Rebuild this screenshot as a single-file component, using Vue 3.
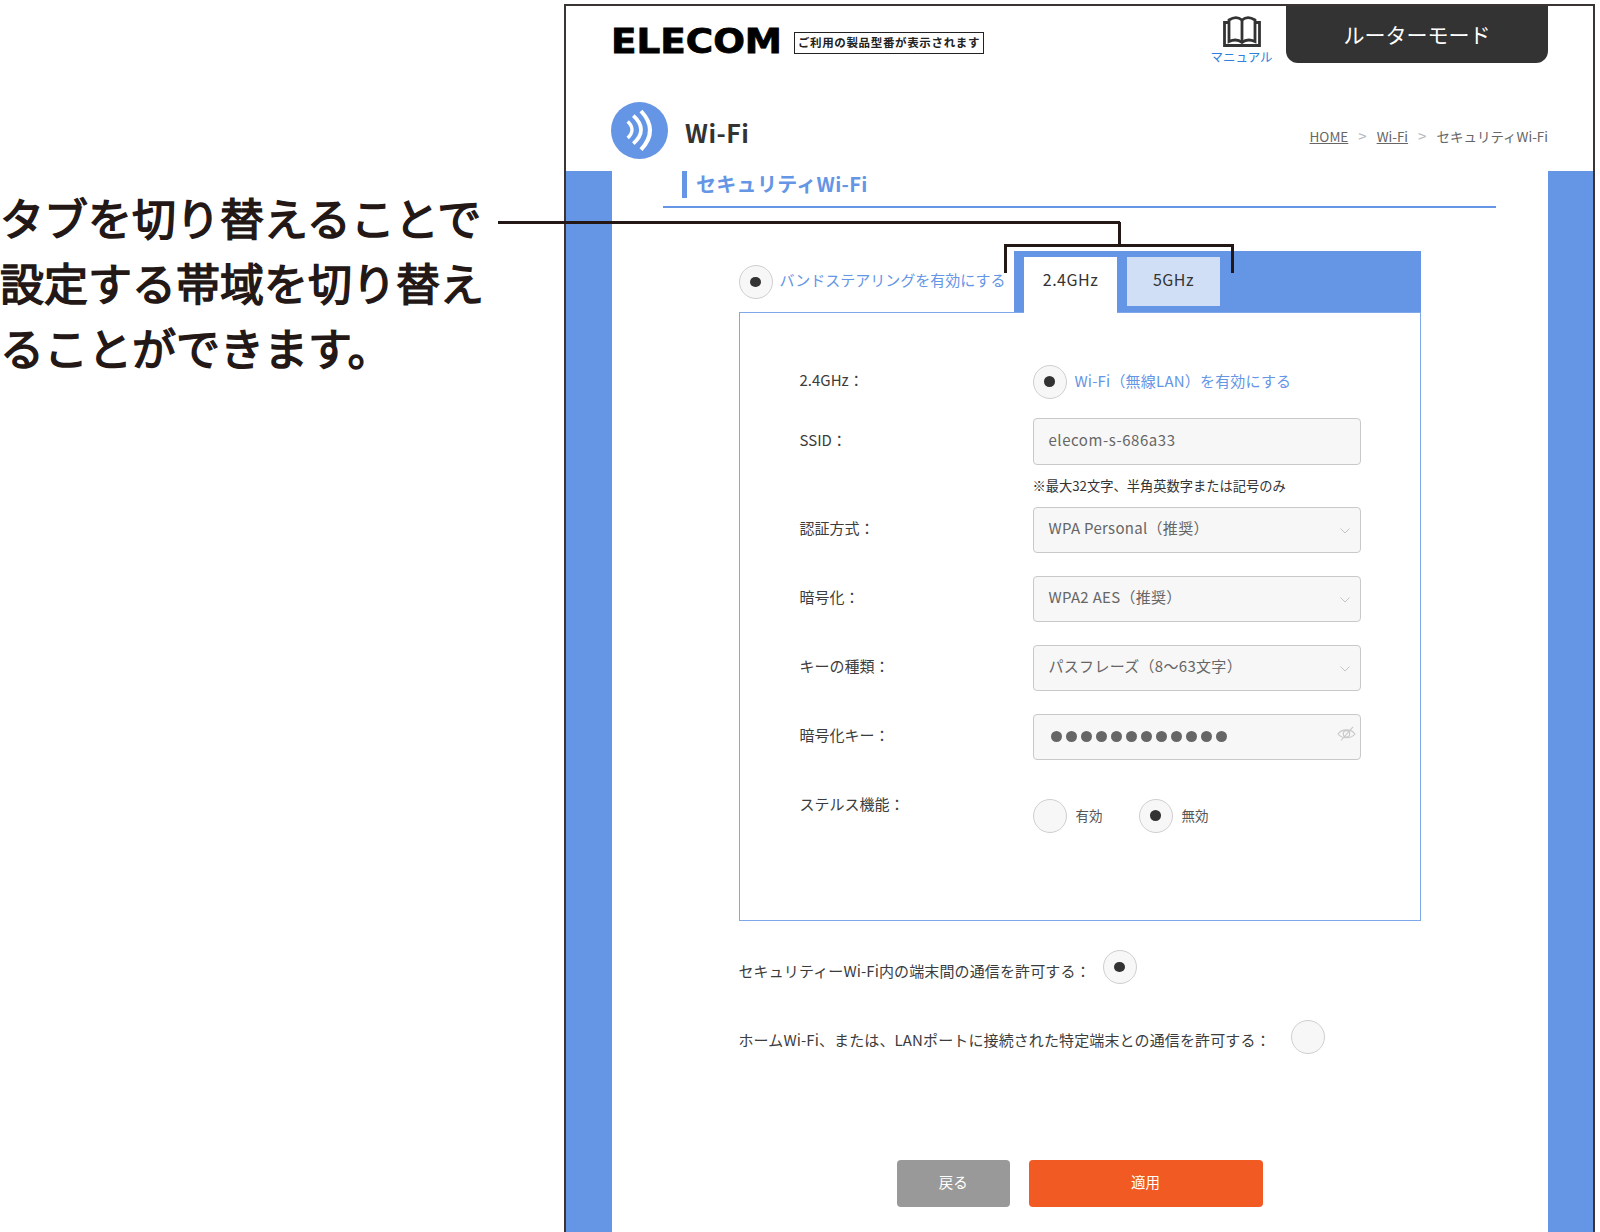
<script setup>
const rows = [
  { label: '認証方式：', value: 'WPA Personal（推奨）' },
  { label: '暗号化：', value: 'WPA2 AES（推奨）' },
  { label: 'キーの種類：', value: 'パスフレーズ（8〜63文字）' },
]
const dots = Array.from({ length: 12 }, (_, i) => i)
</script>

<template>
  <div class="page">
    <aside class="note">
      <p>タブを切り替えることで<br>設定する帯域を切り替え<br>ることができます。</p>
    </aside>

    <div class="frame">
      <header class="head">
        <div class="top">
          <svg class="logo" width="174" height="46" viewBox="0 0 174 46">
            <text x="1" y="35" font-family="DejaVu Sans" font-weight="700" font-size="34" textLength="171" lengthAdjust="spacingAndGlyphs" fill="#000" stroke="#000" stroke-width=".8">ELECOM</text>
          </svg>
          <div class="model">ご利用の製品型番が表示されます</div>
          <a class="manual">
            <svg width="38" height="31" viewBox="0 0 38 31" fill="none" stroke="#333" stroke-width="2.8">
              <path d="M6 4V25.5C10.5 23.5 15.5 23.5 19 26.5C22.5 23.5 27.5 23.5 32 25.5V4C27.5 1 22.5 1 19 4C15.5 1 10.5 1 6 4Z" />
              <path d="M19 4V26.5" />
              <path d="M6 6.5H1.5V29.5H36.5V6.5H32" />
            </svg>
            <span>マニュアル</span>
          </a>
          <div class="mode">ルーターモード</div>
        </div>
        <div class="title-row">
          <svg class="wifi" width="57" height="57" viewBox="0 0 57 57">
            <circle cx="28.5" cy="28.5" r="28.5" fill="#6595e5" />
            <g fill="none" stroke="#fff">
              <path d="M16.7 19.5Q25.3 27.7 16.7 36" stroke-width="3.4" />
              <path d="M22.3 13.7Q37.7 27.7 22.3 41.7" stroke-width="3.8" />
              <path d="M30 9Q48 28.3 30 47.7" stroke-width="4" />
            </g>
          </svg>
          <h1>Wi-Fi</h1>
          <nav class="crumbs">
            <a>HOME</a><i>&gt;</i><a>Wi-Fi</a><i>&gt;</i><span>セキュリティWi-Fi</span>
          </nav>
        </div>
      </header>

      <div class="body">
        <div class="band"></div>
        <main class="main">
          <div class="section">
            <h2>セキュリティWi-Fi</h2>
          </div>

          <div class="wrap">
            <div class="tabline">
              <div class="steer">
                <span class="radio on"></span>
                <span class="link">バンドステアリングを有効にする</span>
              </div>
              <div class="tabs">
                <div class="tab active">2.4GHz</div>
                <div class="tab">5GHz</div>
              </div>
            </div>

            <section class="panel">
              <div class="row r-first">
                <label>2.4GHz：</label>
                <div class="wifi-on">
                  <span class="radio on"></span>
                  <span class="link">Wi-Fi（無線LAN）を有効にする</span>
                </div>
              </div>
              <div class="row r-ssid">
                <label>SSID：</label>
                <div class="field ssid">elecom-s-686a33</div>
              </div>
              <div class="row r-hint">
                <span></span>
                <div class="hint">※最大32文字、半角英数字または記号のみ</div>
              </div>
              <div v-for="r in rows" :key="r.label" class="row r-sel">
                <label>{{ r.label }}</label>
                <div class="field select">
                  {{ r.value }}
                  <svg width="10" height="6" viewBox="0 0 10 6" fill="none" stroke="#c4c4c4" stroke-width="1"><path d="M.5 .5L5 5L9.5 .5" /></svg>
                </div>
              </div>
              <div class="row r-sel">
                <label>暗号化キー：</label>
                <div class="field key">
                  <span v-for="d in dots" :key="d" class="dot"></span>
                  <svg class="eye" width="19" height="15" viewBox="0 0 19 15" fill="none" stroke="#c8c8c8" stroke-width="1.1">
                    <path d="M1 8C5 2.5 14 2.5 18 8C14 13 5 13 1 8Z" />
                    <circle cx="9.5" cy="7.8" r="3.2" />
                    <path d="M4 14.5L16 .8" />
                  </svg>
                </div>
              </div>
              <div class="row r-stealth">
                <label>ステルス機能：</label>
                <div class="choices">
                  <span class="radio"></span><span class="small c-a">有効</span>
                  <span class="radio on"></span><span class="small">無効</span>
                </div>
              </div>
            </section>

            <div class="allow a1">
              <span>セキュリティーWi-Fi内の端末間の通信を許可する：</span>
              <span class="radio on"></span>
            </div>
            <div class="allow a2">
              <span>ホームWi-Fi、または、LANポートに接続された特定端末との通信を許可する：</span>
              <span class="radio"></span>
            </div>
          </div>

          <div class="actions">
            <button class="back" type="button">戻る</button>
            <button class="apply" type="button">適用</button>
          </div>
        </main>
        <div class="band"></div>
      </div>
    </div>

    <div class="lead lead-h"></div>
    <div class="lead lead-v"></div>
    <div class="bracket"></div>
  </div>
</template>

<style>
html, body { margin: 0; background: #fff; }
</style>

<style scoped>
.page {
  position: relative;
  display: flex;
  height: 1232px;
  width: 1600px;
  padding-top: 4px;
  box-sizing: border-box;
  overflow: hidden;
  font-family: "Noto Sans CJK JP", "Noto Sans", sans-serif;
  color: #333;
  background: #fff;
}
.note { width: 564px; flex: none; }
.note p {
  margin: 181px 0 0;
  font-size: 44px;
  line-height: 65px;
  font-weight: 400;
  -webkit-text-stroke: 1.5px #231815;
  color: #231815;
  white-space: nowrap;
}
.frame {
  width: 1031px;
  flex: none;
  box-sizing: border-box;
  border: 2px solid #3a3433;
  border-bottom: 0;
  display: flex;
  flex-direction: column;
}
.head { height: 165px; padding: 0 45px; flex: none; }
.top { display: flex; align-items: flex-start; height: 96px; }
.logo { margin: 12px -2px 0 -1px; }
.model {
  margin: 26px 0 0 12px;
  box-sizing: border-box;
  width: 190px;
  height: 22px;
  border: 1.5px solid #222;
  font-size: 11.5px;
  line-height: 19px;
  font-weight: 700;
  letter-spacing: .65px;
  text-align: center;
  color: #222;
  white-space: nowrap;
}
.manual {
  margin: 10px 14px 0 auto;
  width: 61px;
  display: flex;
  flex-direction: column;
  align-items: center;
  font-size: 12.5px;
  line-height: 16px;
  color: #2f80dc;
}
.manual span { margin-top: 2px; white-space: nowrap; }
.mode {
  width: 262px;
  height: 57px;
  background: #333;
  border-radius: 0 0 12px 12px;
  color: #fff;
  font-size: 21px;
  line-height: 57px;
  text-align: center;
}
.title-row { display: flex; align-items: center; height: 57px; }
.title-row h1 {
  margin: 2px 0 0 17px;
  font-size: 25px;
  font-weight: 700;
  letter-spacing: .5px;
  line-height: 30px;
  color: #333;
}
.crumbs {
  margin: 10px 0 0 auto;
  display: flex;
  font-size: 13.5px;
  line-height: 18px;
  color: #666;
  white-space: nowrap;
}
.crumbs a { text-decoration: underline; }
.crumbs i { font-style: normal; margin: 0 10px; font-size: 15px; color: #b5b9c0; }
.body { flex: 1; display: flex; min-height: 0; }
.band { width: 45.5px; flex: none; background: #6595e5; }
.main { flex: 1; min-width: 0; }
.section {
  margin: 0 51.5px;
  height: 37px;
  box-sizing: border-box;
  border-bottom: 2px solid #6595e5;
  padding-left: 18.5px;
}
.section h2 {
  margin: 0;
  height: 27px;
  border-left: 5px solid #6595e5;
  padding-left: 9.5px;
  font-size: 20px;
  line-height: 25px;
  font-weight: 700;
  letter-spacing: .3px;
  color: #6595e5;
  white-space: nowrap;
}
.wrap { margin: 43px 127px 0 127px; }
.tabline { display: flex; height: 61px; }
.steer { width: 275.5px; flex: none; display: flex; align-items: flex-start; padding-top: 14px; box-sizing: border-box; }
.steer .link { margin-left: 7px; line-height: 30px; white-space: nowrap; }
.link { font-size: 15px; color: #6595e5; }
.wifi-on .link { letter-spacing: .2px; margin-top: -3px; }
.tabs {
  flex: 1;
  background: #6595e5;
  padding: 6px 0 0 10px;
  display: flex;
  align-items: flex-start;
  gap: 10px;
}
.tab {
  width: 93px;
  height: 49px;
  background: #d0dff6;
  text-align: center;
  font-size: 16px;
  letter-spacing: .5px;
  line-height: 45px;
  color: #333;
}
.tab.active {
  position: relative;
  z-index: 1;
  height: 57px;
  background: #fff;
}
.panel {
  height: 609px;
  box-sizing: border-box;
  border: 1.5px solid #7fa8ea;
  padding: 0 0 0 60px;
}
.row { display: grid; grid-template-columns: 233px 328px; align-items: center; font-size: 15px; }
.row label { color: #3c3c3c; white-space: nowrap; padding-bottom: 4px; }
.r-first { margin-top: 51.5px; height: 34px; }
.wifi-on { display: flex; align-items: center; gap: 8px; white-space: nowrap; }
.r-ssid { margin-top: 19px; height: 47px; }
.r-hint { margin-top: 12px; height: 20px; }
.hint { font-size: 13.25px; line-height: 20px; color: #333; white-space: nowrap; margin-top: -1px; }
.r-sel { margin-top: 23px; height: 46px; }
.r-hint + .r-sel { margin-top: 10px; }
.field {
  position: relative;
  box-sizing: border-box;
  height: 100%;
  background: #f7f7f7;
  border: 1.5px solid #c9c9c9;
  border-radius: 4px;
  padding: 0 0 4px 15px;
  display: flex;
  align-items: center;
  color: #666;
  font-size: 15px;
  letter-spacing: .3px;
  white-space: nowrap;
}
.ssid { letter-spacing: .55px; }
.select svg { position: absolute; right: 10px; top: 20px; }
.key { gap: 4px; padding: 0 0 0 17px; }
.dot { width: 11px; height: 11px; border-radius: 50%; background: #666; flex: none; }
.eye { position: absolute; right: 4px; top: 11px; }
.r-stealth { margin-top: 39px; align-items: start; }
.r-stealth label { line-height: 22px; margin-top: -6px; }
.choices { display: flex; align-items: center; height: 34px; }
.small { font-size: 13.5px; color: #555; margin: -1px 0 0 9px; }
.c-a { margin-right: 36px; }
.radio {
  display: inline-flex;
  align-items: center;
  justify-content: center;
  width: 34px;
  height: 34px;
  flex: none;
  box-sizing: border-box;
  border: 1.5px solid #cfcfcf;
  border-radius: 50%;
  background: #f7f7f7;
}
.radio.on::after {
  content: "";
  width: 11px;
  height: 10.5px;
  border-radius: 50%;
  background: #333;
}
.allow { display: flex; align-items: flex-start; font-size: 15px; color: #3c3c3c; white-space: nowrap; letter-spacing: .12px; }
.allow span:first-child { line-height: 22px; }
.a1 span:first-child { margin-top: 10px; }
.a2 span:first-child { margin-top: 9px; }
.a1 { margin-top: 29px; height: 35px; gap: 12px; }
.a2 { margin-top: 35px; height: 35px; gap: 20px; }
.actions { margin: 105px 0 0 285.5px; display: flex; gap: 19px; }
.actions button {
  height: 47px;
  border: 0;
  border-radius: 4px;
  color: #fff;
  font: inherit;
  font-size: 14.5px;
  padding: 0 0 5px;
}
.back { width: 112.5px; background: #999; }
.apply { width: 234px; background: #f25a23; }
.lead { position: absolute; background: #231815; }
.lead-h { left: 498px; top: 221px; width: 622px; height: 3px; }
.lead-v { left: 1118px; top: 222px; width: 3px; height: 24px; }
.bracket {
  position: absolute;
  left: 1004px;
  top: 244px;
  width: 230px;
  height: 29px;
  box-sizing: border-box;
  border: 3px solid #231815;
  border-bottom: 0;
}
</style>
